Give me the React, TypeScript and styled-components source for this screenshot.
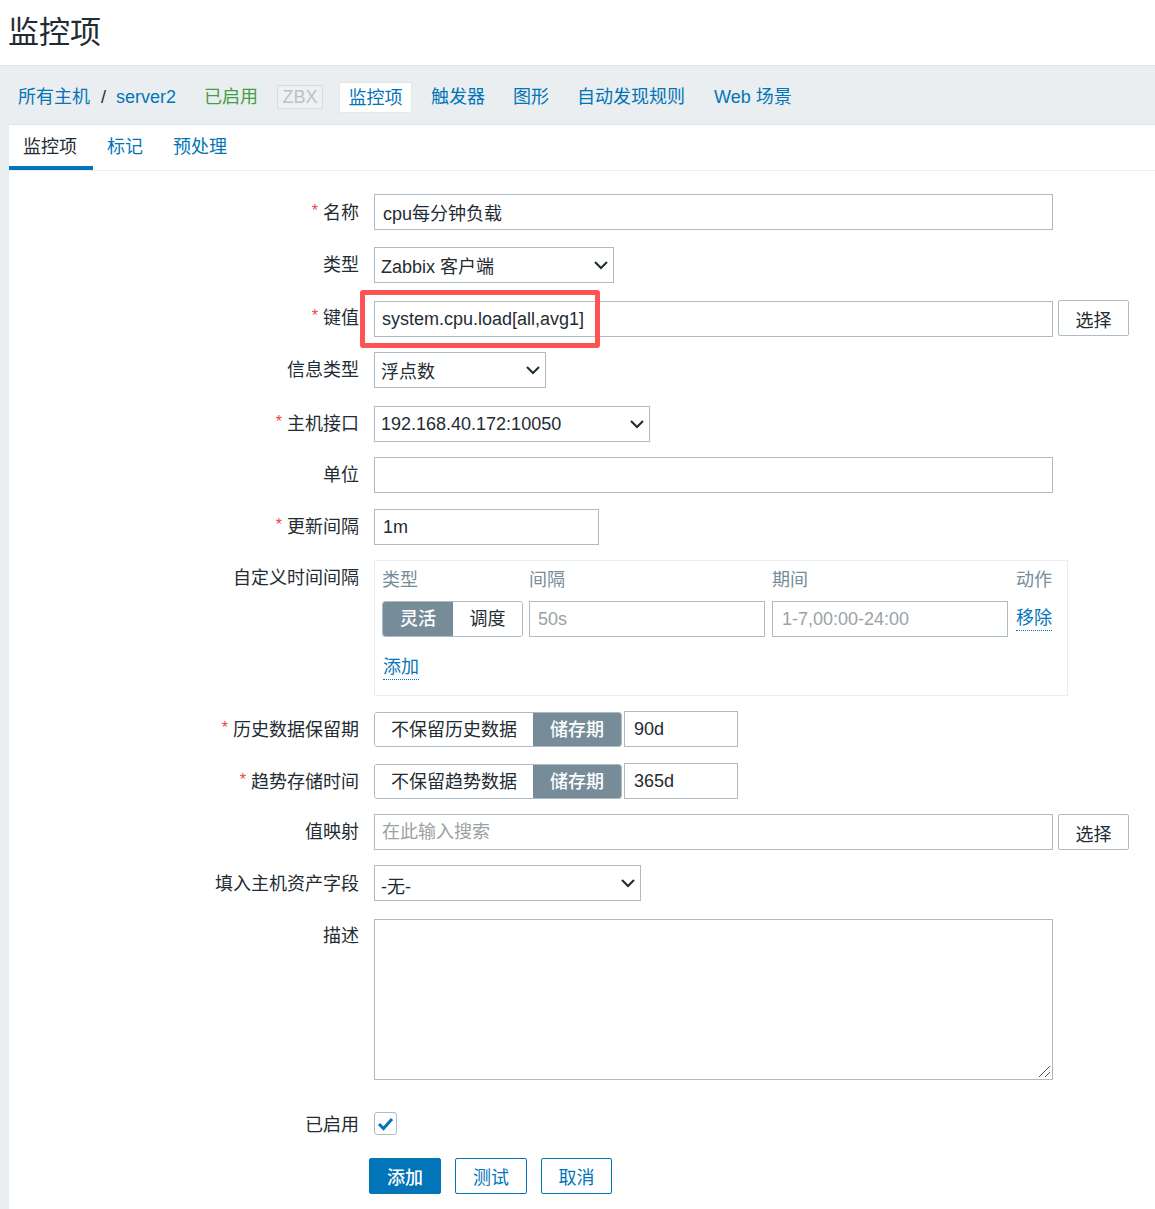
import React from "react";
import styled, { createGlobalStyle } from "styled-components";

const FONT = `"Liberation Sans", "Noto Sans CJK SC", sans-serif`;
const INK = "#1f2c33";
const LINK = "#0275b8";
const LINE = "#acbbc4";
const SLATE = "#768d99";

const Global = createGlobalStyle`
  html, body { margin: 0; padding: 0; background: #ebeef0; }
  body { font-family: ${FONT}; font-size: 18px; color: ${INK}; }
  input, select, textarea, button { font-family: ${FONT}; font-size: 18px; color: ${INK}; }
`;

const Page = styled.div`
  position: relative;
  width: 1155px;
  height: 1209px;
  overflow: hidden;
`;

const Header = styled.header`
  height: 65px;
  background: #fff;
  border-bottom: 1px solid #dfe4e7;
  box-sizing: content-box;
`;

const Title = styled.h1`
  margin: 0;
  padding: 13px 0 0 8px;
  font-size: 31px;
  line-height: 40px;
  font-weight: 400;
`;

const Nav = styled.nav`
  display: flex;
  align-items: center;
  height: 58px;
  padding: 4px 0 0 18px;
  box-sizing: border-box;
`;

const NavLink = styled.a<{ $left?: number }>`
  color: ${LINK};
  margin-left: ${(p) => p.$left ?? 0}px;
  line-height: 24px;
  white-space: nowrap;
`;

const Slash = styled.span`
  margin-left: 11px;
  margin-right: 10px;
`;

const Enabled = styled.span`
  color: #429e47;
  margin-left: 28px;
  line-height: 24px;
`;

const ProtoBadge = styled.span`
  display: flex;
  align-items: center;
  justify-content: center;
  width: 46px;
  height: 24px;
  margin-left: 19px;
  box-sizing: border-box;
  border: 1px solid #d5dbdf;
  border-radius: 2px;
  background: #eef0f2;
  color: #b7c2c9;
`;

const ActiveNav = styled.span`
  display: flex;
  align-items: center;
  justify-content: center;
  width: 73px;
  height: 31px;
  margin-left: 16px;
  padding-bottom: 2px;
  box-sizing: border-box;
  background: #fff;
  border: 1px solid #e3e7ea;
  border-radius: 2px;
  color: ${LINK};
`;

const Panel = styled.main`
  margin-left: 9px;
  height: 1085px;
  background: #fff;
  border-top: 1px solid #dfe4e7;
  box-sizing: border-box;
`;

const Tabs = styled.div`
  display: flex;
  height: 46px;
  border-bottom: 1px solid #ebeef0;
  box-sizing: border-box;
`;

const Tab = styled.a<{ $active?: boolean }>`
  display: block;
  padding: 10px 16px 0 14px;
  height: 45px;
  box-sizing: border-box;
  line-height: 24px;
  color: ${(p) => (p.$active ? INK : LINK)};
  border-bottom: 4px solid ${(p) => (p.$active ? LINK : "transparent")};
`;

const Form = styled.form`
  display: flex;
  flex-direction: column;
  margin: 0;
`;

const Row = styled.div<{ $top: number }>`
  display: flex;
  align-items: flex-start;
  margin-top: ${(p) => p.$top}px;
`;

const Label = styled.label<{ $pad: number }>`
  flex: none;
  width: 350px;
  padding-top: ${(p) => p.$pad}px;
  margin-right: 15px;
  text-align: right;
  line-height: 24px;
  white-space: nowrap;
`;

const Star = styled.span`
  color: #e8483f;
  font-size: 16px;
  margin-right: 5px;
  vertical-align: 3px;
`;

const TextInput = styled.input<{ $w: number; $pad?: number }>`
  width: ${(p) => p.$w}px;
  height: 36px;
  box-sizing: border-box;
  padding: 0 ${(p) => p.$pad ?? 8}px;
  border: 1px solid ${LINE};
  border-radius: 0;
  background: #fff;
  outline: none;
  &::placeholder { color: #9aa2a6; opacity: 1; }
`;

const SelectWrap = styled.div<{ $w: number }>`
  position: relative;
  width: ${(p) => p.$w}px;
  height: 36px;
`;

const Select = styled.select<{ $shift: number }>`
  appearance: none;
  display: block;
  width: 100%;
  height: 100%;
  box-sizing: border-box;
  padding: ${(p) => p.$shift}px 24px 0 6px;
  border: 1px solid ${LINE};
  border-radius: 0;
  background: #fff;
  outline: none;
`;

const Chevron = styled.svg`
  position: absolute;
  right: 5px;
  top: 13px;
  pointer-events: none;
`;

const ChooseButton = styled.button<{ $lift?: number }>`
  width: 71px;
  height: 36px;
  margin: ${(p) => -(p.$lift ?? 0)}px 0 0 5px;
  padding: 2px 0 0;
  box-sizing: border-box;
  border: 1px solid ${LINE};
  border-radius: 2px;
  background: #fff;
`;

const Segments = styled.div`
  display: flex;
  flex: none;
  justify-self: start;
  height: 36px;
  box-sizing: border-box;
  border: 1px solid ${LINE};
  border-radius: 3px;
  overflow: hidden;
`;

const Segment = styled.span<{ $on?: boolean; $w: number }>`
  display: flex;
  align-items: center;
  justify-content: center;
  width: ${(p) => p.$w}px;
  padding-bottom: 4px;
  box-sizing: border-box;
  background: ${(p) => (p.$on ? SLATE : "#fff")};
  color: ${(p) => (p.$on ? "#fff" : INK)};
  font-weight: ${(p) => (p.$on ? 500 : 400)};
`;

const Storage = styled.div`
  display: flex;
  gap: 2px;
  & > ${Segments} { margin-top: 1px; height: 35px; }
`;

const Intervals = styled.div`
  width: 694px;
  height: 136px;
  box-sizing: border-box;
  padding: 7px 7px 0;
  border: 1px solid #ebeef0;
  display: grid;
  grid-template-columns: 147px 243px 244px 1fr;
  grid-template-rows: 32px 36px;
  row-gap: 1px;
`;

const IntervalHead = styled.span`
  color: ${SLATE};
  line-height: 24px;
`;

const DashedLink = styled.a`
  justify-self: start;
  align-self: start;
  margin-top: 6px;
  color: ${LINK};
  line-height: 23px;
  border-bottom: 1px dotted ${LINK};
`;

const AddCell = styled.div`
  grid-column: 1 / -1;
  padding: 12px 0 0 1px;
  display: flex;
`;

const NotesWrap = styled.div`
  position: relative;
  width: 679px;
  height: 161px;
`;

const Notes = styled.textarea`
  display: block;
  width: 100%;
  height: 100%;
  box-sizing: border-box;
  padding: 4px 7px;
  border: 1px solid ${LINE};
  border-radius: 0;
  outline: none;
  resize: none;
`;

const Grip = styled.svg`
  position: absolute;
  right: 2px;
  bottom: 2px;
  pointer-events: none;
`;

const CheckBox = styled.span`
  display: flex;
  align-items: center;
  justify-content: center;
  width: 23px;
  height: 23px;
  box-sizing: border-box;
  border: 1px solid ${LINE};
  border-radius: 3px;
  background: #fff;
`;

const Actions = styled.div`
  display: flex;
  gap: 14px;
  margin: 21px 0 0 360px;
`;

const ActionButton = styled.button<{ $primary?: boolean; $w?: number }>`
  width: ${(p) => p.$w ?? 72}px;
  height: 36px;
  padding: 0;
  box-sizing: border-box;
  border: 1px solid ${LINK};
  border-radius: 2px;
  background: ${(p) => (p.$primary ? LINK : "#fff")};
  color: ${(p) => (p.$primary ? "#fff" : LINK)};
  font-weight: ${(p) => (p.$primary ? 500 : 400)};
`;

const Highlight = styled.div`
  position: absolute;
  left: 360px;
  top: 290px;
  width: 240px;
  height: 58px;
  box-sizing: border-box;
  border: 5px solid #fd5353;
  border-radius: 3px;
  pointer-events: none;
`;

const Field = ({ label, required, top, pad = 5, children }: { label: string; required?: boolean; top: number; pad?: number; children: React.ReactNode }) => (
  <Row $top={top}>
    <Label $pad={pad}>
      {required && <Star>*</Star>}
      {label}
    </Label>
    {children}
  </Row>
);

const Dropdown = ({ w, shift = 0, value }: { w: number; shift?: number; value: string }) => (
  <SelectWrap $w={w}>
    <Select $shift={shift}>
      <option>{value}</option>
    </Select>
    <Chevron width="16" height="10" viewBox="0 0 16 10">
      <path d="M2 2l6 6 6-6" fill="none" stroke={INK} strokeWidth="2" />
    </Chevron>
  </SelectWrap>
);

const App = () => (
  <Page>
    <Global />
    <Header>
      <Title>监控项</Title>
    </Header>
    <Nav>
      <NavLink>所有主机</NavLink>
      <Slash>/</Slash>
      <NavLink>server2</NavLink>
      <Enabled>已启用</Enabled>
      <ProtoBadge>ZBX</ProtoBadge>
      <ActiveNav>监控项</ActiveNav>
      <NavLink $left={19}>触发器</NavLink>
      <NavLink $left={28}>图形</NavLink>
      <NavLink $left={28}>自动发现规则</NavLink>
      <NavLink $left={29}>Web 场景</NavLink>
    </Nav>
    <Panel>
      <Tabs>
        <Tab $active>监控项</Tab>
        <Tab>标记</Tab>
        <Tab>预处理</Tab>
      </Tabs>
      <Form>
        <Field label="名称" required top={23}>
          <TextInput $w={679} defaultValue="cpu每分钟负载" />
        </Field>
        <Field label="类型" top={17} pad={6}>
          <Dropdown w={240} shift={4} value="Zabbix 客户端" />
        </Field>
        <Field label="键值" required top={18} pad={3}>
          <TextInput $w={679} $pad={7} defaultValue="system.cpu.load[all,avg1]" />
          <ChooseButton type="button" $lift={1}>选择</ChooseButton>
        </Field>
        <Field label="信息类型" top={15} pad={6}>
          <Dropdown w={172} shift={4} value="浮点数" />
        </Field>
        <Field label="主机接口" required top={18} pad={4}>
          <Dropdown w={276} value="192.168.40.172:10050" />
        </Field>
        <Field label="单位" top={15} pad={6}>
          <TextInput $w={679} />
        </Field>
        <Field label="更新间隔" required top={16} pad={4}>
          <TextInput $w={225} defaultValue="1m" />
        </Field>
        <Field label="自定义时间间隔" top={15} pad={6}>
          <Intervals>
            <IntervalHead>类型</IntervalHead>
            <IntervalHead>间隔</IntervalHead>
            <IntervalHead>期间</IntervalHead>
            <IntervalHead>动作</IntervalHead>
            <Segments>
              <Segment $on $w={70}>灵活</Segment>
              <Segment $w={69}>调度</Segment>
            </Segments>
            <TextInput $w={236} placeholder="50s" />
            <TextInput $w={236} $pad={9} placeholder="1-7,00:00-24:00" />
            <DashedLink>移除</DashedLink>
            <AddCell>
              <DashedLink>添加</DashedLink>
            </AddCell>
          </Intervals>
        </Field>
        <Field label="历史数据保留期" required top={15}>
          <Storage>
            <Segments>
              <Segment $w={158}>不保留历史数据</Segment>
              <Segment $on $w={88}>储存期</Segment>
            </Segments>
            <TextInput $w={114} $pad={9} defaultValue="90d" />
          </Storage>
        </Field>
        <Field label="趋势存储时间" required top={16}>
          <Storage>
            <Segments>
              <Segment $w={158}>不保留趋势数据</Segment>
              <Segment $on $w={88}>储存期</Segment>
            </Segments>
            <TextInput $w={114} $pad={9} defaultValue="365d" />
          </Storage>
        </Field>
        <Field label="值映射" top={15} pad={6}>
          <TextInput $w={679} $pad={7} placeholder="在此输入搜索" />
          <ChooseButton type="button">选择</ChooseButton>
        </Field>
        <Field label="填入主机资产字段" top={15} pad={7}>
          <Dropdown w={267} shift={8} value="-无-" />
        </Field>
        <Field label="描述" top={18}>
          <NotesWrap>
            <Notes />
            <Grip width="13" height="13" viewBox="0 0 13 13">
              <path d="M1 12L12 1M7 12l5-5" fill="none" stroke="#555" strokeWidth="1" />
            </Grip>
          </NotesWrap>
        </Field>
        <Field label="已启用" top={32} pad={1}>
          <CheckBox>
            <svg width="17" height="15" viewBox="0 0 17 15">
              <path d="M2 8l4.5 4.5L15 3" fill="none" stroke={LINK} strokeWidth="3" />
            </svg>
          </CheckBox>
        </Field>
        <Actions>
          <ActionButton $primary type="button">添加</ActionButton>
          <ActionButton type="button">测试</ActionButton>
          <ActionButton $w={71} type="button">取消</ActionButton>
        </Actions>
      </Form>
    </Panel>
    <Highlight />
  </Page>
);

export default App;
